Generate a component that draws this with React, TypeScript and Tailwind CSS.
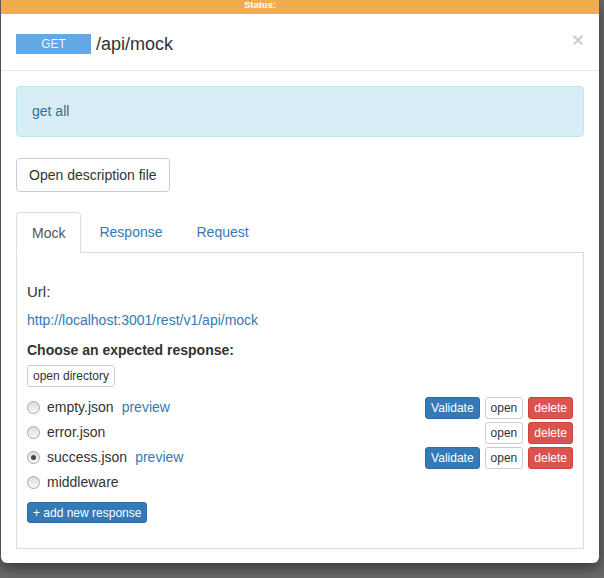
const responses = [
  { name: 'empty.json', preview: true, validate: true, checked: false },
  { name: 'error.json', preview: false, validate: false, checked: false },
  { name: 'success.json', preview: true, validate: true, checked: true },
  { name: 'middleware', preview: false, validate: false, checked: false },
];

function Radio({ checked }: { checked: boolean }) {
  return (
    <span className="flex h-[13px] w-[13px] shrink-0 items-center justify-center rounded-full border border-[#a8a8a8] bg-gradient-to-b from-[#dcdcdc] to-[#f8f8f8]">
      {checked && <span className="h-[5px] w-[5px] rounded-full bg-[#444]" />}
    </span>
  );
}

export default function App() {
  return (
    <div
      className="h-[578px] w-[604px] overflow-hidden bg-[#6a6a6a] text-[14px] text-[#333]"
      style={{ fontFamily: '"Liberation Sans", Arial, sans-serif' }}
    >
      <div className="ml-[1px] w-[598px] rounded-b-[6px] bg-white shadow-[0_5px_15px_rgba(0,0,0,0.5)]">
        {/* status strip */}
        <div className="flex h-[14px] justify-center bg-[#f0ad4e] pr-[80px]">
          <span className="text-[9.5px] font-bold leading-[9px] text-white">Status:</span>
        </div>

        {/* header */}
        <div className="flex h-[57px] items-start justify-between border-b border-[#e5e5e5] pl-[15px] pr-[15px] pt-[20px]">
          <div className="flex items-center gap-[5px]">
            <span className="flex h-[20px] w-[75px] items-center justify-center bg-[#62a8e4] text-[12px] text-[#eef5fc]">
              GET
            </span>
            <span className="text-[18px] leading-[20px] text-[#333]">/api/mock</span>
          </div>
          <button className="-mt-[5px] text-[21px] font-bold leading-[21px] text-black/20">×</button>
        </div>

        {/* body */}
        <div className="px-[15px] pb-[14px] pt-[15px]">
          <div className="flex h-[51px] items-center rounded-[4px] border border-[#bce8f1] bg-[#d9edf7] px-[15px] text-[#31708f]">
            get all
          </div>

          <button className="mt-[21px] h-[34px] rounded-[4px] border border-[#ccc] bg-white px-[12px] text-[14px] text-[#333]">
            Open description file
          </button>

          {/* tabs */}
          <div className="mt-[20px] flex h-[41px] border-b border-[#ddd]">
            <div className="-mb-px flex h-[42px] items-center rounded-t-[4px] border border-[#ddd] border-b-white bg-white px-[15px] pt-[1px] text-[#555]">
              Mock
            </div>
            <div className="ml-[2px] flex items-center px-[16px] pt-[1px] text-[#337ab7]">Response</div>
            <div className="ml-[2px] flex items-center px-[16px] pt-[1px] text-[#337ab7]">Request</div>
          </div>

          <div className="border border-t-0 border-[#ddd] px-[10px] pb-[25px] pt-[28px]">
            <div className="text-[15px] leading-[21px]">Url:</div>
            <div className="mt-[8px] leading-[20px] text-[#337ab7]">http://localhost:3001/rest/v1/api/mock</div>
            <div className="mt-[10px] font-bold leading-[20px]">Choose an expected response:</div>
            <button className="mt-[5px] h-[22px] rounded-[3px] border border-[#ccc] bg-white px-[5px] text-[12px] text-[#333]">
              open directory
            </button>

            <div className="mt-[8px]">
              {responses.map((r) => (
                <div key={r.name} className="flex h-[25px] items-center justify-between">
                  <div className="flex items-center gap-[7px]">
                    <Radio checked={r.checked} />
                    <span>{r.name}</span>
                    {r.preview && <span className="ml-[1px] text-[#337ab7]">preview</span>}
                  </div>
                  <div className="flex gap-[5px]">
                    {r.validate && (
                      <button className="h-[22px] rounded-[3px] border border-[#2e6da4] bg-[#337ab7] px-[5px] text-[12px] text-white">
                        Validate
                      </button>
                    )}
                    {r.name !== 'middleware' && (
                      <>
                        <button className="h-[22px] rounded-[3px] border border-[#ccc] bg-white px-[5px] text-[12px] text-[#333]">
                          open
                        </button>
                        <button className="h-[22px] rounded-[3px] border border-[#d43f3a] bg-[#d9534f] px-[5px] text-[12px] text-white">
                          delete
                        </button>
                      </>
                    )}
                  </div>
                </div>
              ))}
            </div>

            <button className="mt-[7px] h-[21px] rounded-[3px] border border-[#2e6da4] bg-[#337ab7] px-[5px] text-[12px] text-white">
              + add new response
            </button>
          </div>
        </div>
      </div>
    </div>
  );
}
